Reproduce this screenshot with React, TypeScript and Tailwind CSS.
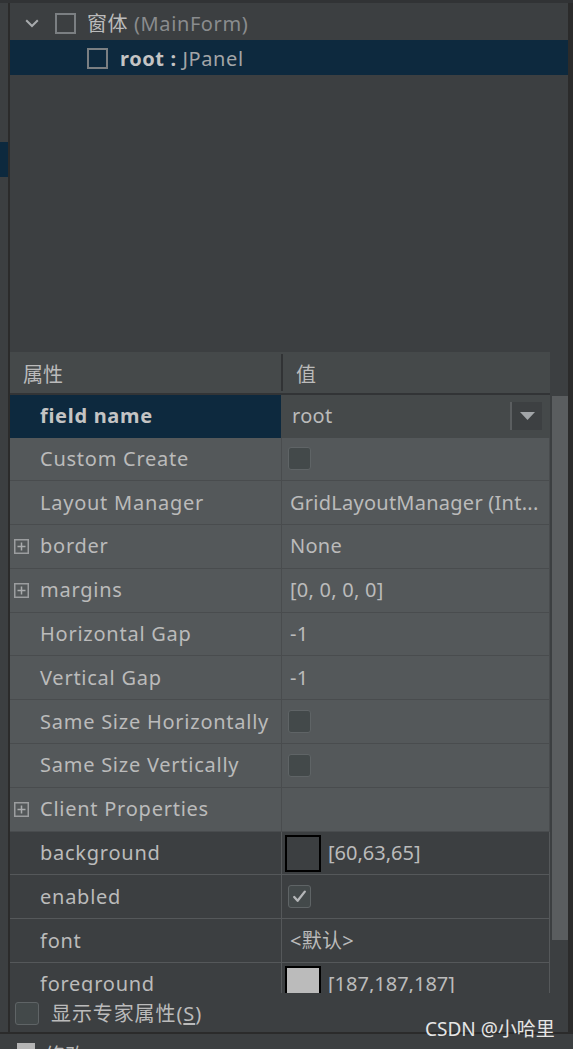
import React from 'react'

const FONT = { fontFamily: '"Noto Sans", "Noto Sans CJK SC", sans-serif' }

type Row = {
  label: string
  plus?: boolean
  kind: 'text' | 'check' | 'checked' | 'swatch' | 'none'
  value?: string
  swatch?: string
  dark?: boolean
}

const ROWS: Row[] = [
  { label: 'Custom Create', kind: 'check' },
  { label: 'Layout Manager', kind: 'text', value: 'GridLayoutManager (Int...' },
  { label: 'border', plus: true, kind: 'text', value: 'None' },
  { label: 'margins', plus: true, kind: 'text', value: '[0, 0, 0, 0]' },
  { label: 'Horizontal Gap', kind: 'text', value: '-1' },
  { label: 'Vertical Gap', kind: 'text', value: '-1' },
  { label: 'Same Size Horizontally', kind: 'check' },
  { label: 'Same Size Vertically', kind: 'check' },
  { label: 'Client Properties', plus: true, kind: 'none' },
  { label: 'background', kind: 'swatch', swatch: '#3c3f41', value: '[60,63,65]', dark: true },
  { label: 'enabled', kind: 'checked', dark: true },
  { label: 'font', kind: 'text', value: '<默认>', dark: true },
  { label: 'foreground', kind: 'swatch', swatch: '#bbbbbb', value: '[187,187,187]', dark: true },
]

function PlusBox() {
  return (
    <svg width="15" height="15" viewBox="0 0 15 15">
      <rect x="0.75" y="0.75" width="13.5" height="13.5" fill="none" stroke="#9b9d9f" strokeWidth="1.5" />
      <path d="M3.5 7.5h8M7.5 3.5v8" stroke="#a9abad" strokeWidth="1.5" />
    </svg>
  )
}

function CheckBox({ checked }: { checked?: boolean }) {
  return (
    <div className="w-[23px] h-[23px] rounded-[3px] border-[1.5px] border-[#5f6466] bg-[#43494a] flex items-center justify-center">
      {checked && (
        <svg width="17" height="17" viewBox="0 0 17 17">
          <path d="M3.2 9l3.4 3.8L13.8 3.6" fill="none" stroke="#b4b6b8" strokeWidth="2.3" strokeLinecap="round" strokeLinejoin="round" />
        </svg>
      )}
    </div>
  )
}

function TreeBox() {
  return <div className="w-[21px] h-[21px] border-2 border-[#7b7f82]" />
}

function PropRow({ r }: { r: Row }) {
  const bg = r.dark ? 'bg-[#3c3f41] border-[#55585a]' : 'bg-[#54585a] border-[#494c4e]'
  return (
    <div className={`shrink-0 flex h-[43.8px] border-b border-r text-[20px] text-[#bbbbbb] ${bg}`}>
      <div className="w-[271px] flex items-center pl-[4px]">
        <div className="w-[26px] flex items-center">{r.plus && <PlusBox />}</div>
        <span className="whitespace-nowrap tracking-[0.75px]">{r.label}</span>
      </div>
      <div className={`flex-1 flex items-center border-l overflow-hidden whitespace-nowrap ${r.dark ? 'border-[#55585a]' : 'border-[#494c4e]'}`}>
        {r.kind === 'text' && <span className="pl-[8px] tracking-[0.25px]">{r.value}</span>}
        {r.kind === 'check' && <div className="pl-[6px]"><CheckBox /></div>}
        {r.kind === 'checked' && <div className="pl-[6px]"><CheckBox checked /></div>}
        {r.kind === 'swatch' && (
          <div className="flex items-center pl-[3px] gap-[7px]">
            <div className="w-[36px] h-[37px] border-2 border-black" style={{ background: r.swatch }} />
            <span>{r.value}</span>
          </div>
        )}
      </div>
    </div>
  )
}

export default function App() {
  return (
    <div className="relative w-[573px] h-[1049px] overflow-hidden bg-[#3c3f41] text-[#bbbbbb]" style={FONT}>
      <div className="h-[3px] bg-[#313335]" />
      <div className="flex h-[1029px]">
        {/* left gutter */}
        <div className="w-[8px] flex flex-col">
          <div className="h-[139px]" />
          <div className="h-[35px] bg-[#0d293e]" />
        </div>
        <div className="w-[2px] bg-[#2b2b2b]" />

        <div className="w-[558px] flex flex-col">
          {/* component tree */}
          <div className="h-[349px] shrink-0 pt-[2px]">
            <div className="h-[35px] flex items-center text-[20px] pt-[2px]">
              <div className="w-[45px] pl-[15px] flex items-center">
                <svg width="14" height="9" viewBox="0 0 14 9">
                  <path d="M1.2 1.2L7 7l5.8-5.8" fill="none" stroke="#a8abad" strokeWidth="2" />
                </svg>
              </div>
              <TreeBox />
              <span className="ml-[11px] whitespace-nowrap tracking-[0.6px]">
                窗体 <span className="text-[#8a8c8e]">(MainForm)</span>
              </span>
            </div>
            <div className="h-[35px] flex items-center bg-[#0d293e] text-[20px] pl-[77px] pt-[2px]">
              <TreeBox />
              <span className="ml-[12px] whitespace-nowrap tracking-[0.6px]">
                <span className="font-bold text-[#c4c4c4]">root</span>
                <span className="font-bold text-[#c4c4c4]"> :</span>
                <span className="text-[#a3a5a7]"> JPanel</span>
              </span>
            </div>
          </div>

          {/* property table */}
          <div className="h-[641px] shrink-0 flex overflow-hidden">
            <div className="w-[540px] flex flex-col">
              <div className="shrink-0 h-[43px] flex bg-[#45494a] border-b-2 border-[#323436] text-[20px]">
                <div className="w-[271px] flex items-center pl-[13px] pt-[5px]">属性</div>
                <div className="flex items-center">
                  <div className="w-[2px] h-[37px] bg-[#313335]" />
                  <span className="pl-[13px] pt-[5px]">值</span>
                </div>
              </div>
              <div className="shrink-0 h-[42.5px] flex text-[20px]">
                <div className="w-[271px] bg-[#0d293e] flex items-center pl-[30px] font-bold text-[#c4c4c4] tracking-[0.7px]">field name</div>
                <div className="flex-1 bg-[#45494a] flex items-center pl-[11px] pr-[8px]">
                  <span className="flex-1 tracking-[0.3px]">root</span>
                  <div className="w-[32px] h-[28px] bg-[#3d4042] border-l-2 border-[#5b5e60] flex items-center justify-center">
                    <svg width="15" height="8" viewBox="0 0 15 8">
                      <path d="M0 0h15L7.5 8z" fill="#a2a5a8" />
                    </svg>
                  </div>
                </div>
              </div>
              {ROWS.map((r) => (
                <PropRow key={r.label} r={r} />
              ))}
            </div>
            {/* scrollbar */}
            <div className="w-[18px] flex flex-col">
              <div className="h-[44px] shrink-0" />
              <div className="shrink-0 ml-[2px] w-[16px] h-[544px] bg-[#5a5d5f]" />
            </div>
          </div>

          {/* expert toggle */}
          <div className="h-[39px] shrink-0 flex items-center pl-[5px] pt-[2px] text-[20px]">
            <div className="w-[24px] h-[23px] rounded-[3px] border-[1.5px] border-[#5f6466] bg-[#43494a]" />
            <span className="ml-[12px] whitespace-nowrap tracking-[0.9px]">
              显示专家属性(<span className="underline underline-offset-2">S</span>)
            </span>
          </div>
        </div>

        <div className="w-[5px] bg-[#2b2b2b]" />
      </div>
      <div className="h-[2px] bg-[#2b2b2b]" />
      <div className="flex items-start pl-[17px] pt-[9px] text-[20px]">
        <div className="w-[18px] h-[18px] bg-[#b5b5b5]" />
        <span className="ml-[10px] -mt-[2px]">修改</span>
      </div>

      <div className="absolute left-[425px] top-[1015px] text-[19px] text-[#e6e6e6] whitespace-nowrap">CSDN @小哈里</div>
    </div>
  )
}
